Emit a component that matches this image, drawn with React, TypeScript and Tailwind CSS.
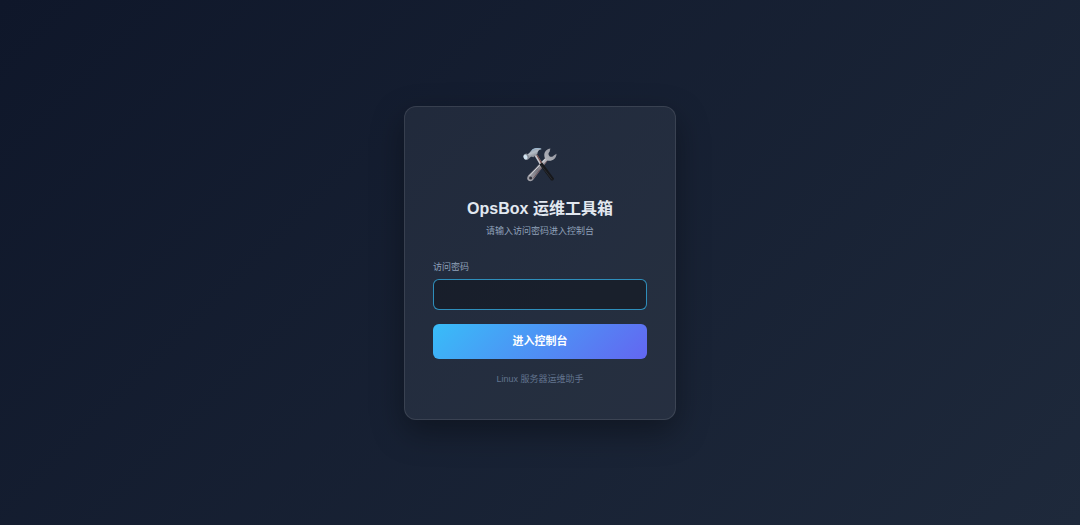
import { useState, type FormEvent } from "react";

function ToolsIcon() {
  return (
    <svg viewBox="0 0 40 40" className="size-10" aria-hidden="true">
      <defs>
        <linearGradient id="wrench" x1="0" y1="1" x2="1" y2="0">
          <stop offset="0" stopColor="#a9a9b0" />
          <stop offset="0.35" stopColor="#77767f" />
          <stop offset="0.6" stopColor="#b4b6bd" />
          <stop offset="1" stopColor="#8e919b" />
        </linearGradient>
        <linearGradient id="head" x1="0" y1="0" x2="0.5" y2="1">
          <stop offset="0" stopColor="#7d93a8" />
          <stop offset="0.5" stopColor="#b4bbc4" />
          <stop offset="1" stopColor="#6f6f78" />
        </linearGradient>
      </defs>

      {/* wrench */}
      <path
        d="M30.4 3.4 C26.6 3.8 24.2 6.8 24.3 10.2 C24.3 11.6 24.6 12.6 25 13.2 L8.4 30.2 C6.8 32 6.8 34.4 8.3 35.6 C10 36.8 12.2 36.3 13.4 34.6 L27.6 15.6 C31.6 16.6 36.4 14.4 36.5 8.8 L33.8 10.4 C33 11.9 30.8 12.4 29.5 11.2 C28.1 9.9 28.2 7.8 29.6 6.8 Z"
        fill="url(#wrench)"
      />
      <path d="M9.4 31 L25.4 14" stroke="#dedfe3" strokeWidth="0.9" fill="none" />
      <path d="M13 33.6 L27 15.8" stroke="#65434a" strokeWidth="0.7" fill="none" />
      <circle cx="10.6" cy="33" r="1.5" fill="#30303a" />

      {/* hammer */}
      <path d="M14.4 10.6 L17 9.6 L22.2 18 L20.2 20.2 Z" fill="#c7c7cd" />
      <path d="M16.2 10 L17.2 9.6 L22.2 18 L21.2 19 Z" fill="#754f4b" />
      <path d="M19.4 19.6 L22.2 17.6 L34 33.4 C34 35 32.4 36 31 35.2 Z" fill="#17181b" />
      <path d="M20.8 20 L32 34.4" stroke="#36393f" strokeWidth="0.6" />
      <path
        d="M7.4 9.4 C9.2 8.6 10.2 6.4 11.8 5 C14.4 2.6 18.6 2.6 22 4 C19 4.6 17.6 6 17.4 8.8 L13.4 12.2 C11.8 11.2 10.6 11.4 8.8 13.8 Z"
        fill="url(#head)"
      />
      <path d="M11.8 5.4 C14.4 3.2 18 3 21 4" stroke="#9ebdd6" strokeWidth="0.8" fill="none" />
      <ellipse cx="6.3" cy="11.8" rx="2.7" ry="3.2" transform="rotate(-25 6.3 11.8)" fill="#858b95" />
      <ellipse cx="5.5" cy="12.1" rx="1.9" ry="2.5" transform="rotate(-25 5.5 12.1)" fill="#d3e5f2" />
    </svg>
  );
}

export default function App() {
  const [password, setPassword] = useState("");

  function handleSubmit(e: FormEvent) {
    e.preventDefault();
  }

  return (
    <main className="flex min-h-screen items-center justify-center bg-linear-[135deg,#0f172a,#1e293b] font-['Liberation_Sans','Noto_Sans_CJK_SC',sans-serif]">
      <section className="w-full max-w-[272px] rounded-xl border border-white/10 bg-white/6 px-7 pt-[38px] pb-[33px] text-center shadow-[0_12px_32px_rgba(0,0,0,0.35)]">
        <div className="flex justify-center">
          <ToolsIcon />
        </div>
        <h1 className="mt-3 text-base leading-6 font-bold text-slate-200">OpsBox 运维工具箱</h1>
        <p className="mt-[3px] text-[9px] leading-[14px] text-slate-400">请输入访问密码进入控制台</p>

        <form onSubmit={handleSubmit} className="mt-[22px]">
          <label htmlFor="password" className="block text-left text-[9px] leading-[14px] text-slate-400">
            访问密码
          </label>
          <input
            id="password"
            type="password"
            value={password}
            onChange={(e) => setPassword(e.target.value)}
            className="mt-[5px] block h-[31px] w-full rounded-md border border-[#38bdf8]/70 bg-black/30 px-3 text-[11px] text-slate-200 outline-none"
          />
          <button
            type="submit"
            className="mt-3.5 block h-[35px] w-full rounded-md bg-linear-[135deg,#38bdf8,#6366f1] text-[11px] font-bold text-white"
          >
            进入控制台
          </button>
        </form>

        <p className="mt-[13px] text-[9px] leading-[14px] text-slate-500">Linux 服务器运维助手</p>
      </section>
    </main>
  );
}
